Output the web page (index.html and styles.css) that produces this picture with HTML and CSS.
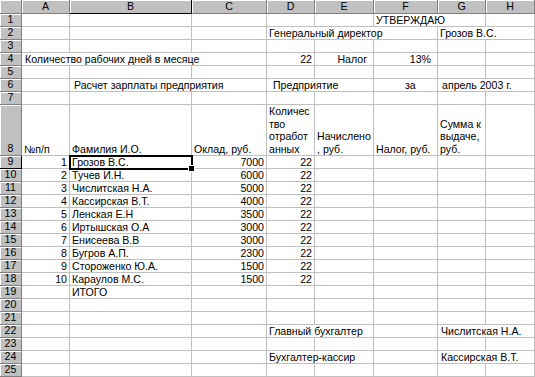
FILE: index.html
```html
<!DOCTYPE html>
<html lang="ru">
<head>
<meta charset="utf-8">
<title>Расчет зарплаты</title>
<link rel="stylesheet" href="styles.css">
</head>
<body class="page">
<table class="sheet">
  <colgroup>
    <col class="w-rh"><col class="w-a"><col class="w-b"><col class="w-c"><col class="w-d"><col class="w-e"><col class="w-f"><col class="w-g"><col class="w-h">
  </colgroup>
  <tr class="colhead">
    <th class="hd corner"></th>
    <th class="hd">A</th><th class="hd sel">B</th><th class="hd">C</th><th class="hd">D</th><th class="hd">E</th><th class="hd">F</th><th class="hd">G</th><th class="hd">H</th>
  </tr>
  <tr>
    <th class="hd">1</th>
    <td></td><td></td><td></td><td></td><td></td><td colspan="2">УТВЕРЖДАЮ</td><td></td>
  </tr>
  <tr>
    <th class="hd">2</th>
    <td></td><td></td><td></td><td colspan="3">Генеральный директор</td><td colspan="2">Грозов В.С.</td>
  </tr>
  <tr>
    <th class="hd">3</th>
    <td></td><td></td><td></td><td></td><td></td><td></td><td></td><td></td>
  </tr>
  <tr>
    <th class="hd">4</th>
    <td colspan="3" class="ind1">Количество рабочих дней в месяце</td><td class="num">22</td><td class="num pad-r">Налог</td><td class="num pad-r">13%</td><td></td><td></td>
  </tr>
  <tr>
    <th class="hd">5</th>
    <td></td><td></td><td></td><td></td><td></td><td></td><td></td><td></td>
  </tr>
  <tr>
    <th class="hd">6</th>
    <td></td><td colspan="2" class="ind2">Расчет зарплаты предприятия</td><td colspan="2" class="ind4">Предприятие</td><td class="pad-for">за</td><td colspan="2" class="ind2">апрель 2003 г.</td>
  </tr>
  <tr>
    <th class="hd">7</th>
    <td></td><td></td><td></td><td></td><td></td><td></td><td></td><td></td>
  </tr>
  <tr class="tall">
    <th class="hd">8</th>
    <td>№п/п</td>
    <td>Фамилия И.О.</td>
    <td>Оклад, руб.</td>
    <td class="wrap">Количес<br>тво<br>отработ<br>анных</td>
    <td class="wrap">Начислено<br>, руб.</td>
    <td>Налог, руб.</td>
    <td class="wrap">Сумма к<br>выдаче,<br>руб.</td>
    <td></td>
  </tr>
  <tr>
    <th class="hd hd-sel">9</th>
    <td class="num">1</td><td class="active">Грозов В.С.<span class="cursor"><span class="handle"></span></span></td><td class="num">7000</td><td class="num">22</td><td></td><td></td><td></td><td></td>
  </tr>
  <tr>
    <th class="hd">10</th>
    <td class="num">2</td><td>Тучев И.Н.</td><td class="num">6000</td><td class="num">22</td><td></td><td></td><td></td><td></td>
  </tr>
  <tr>
    <th class="hd">11</th>
    <td class="num">3</td><td>Числитская Н.А.</td><td class="num">5000</td><td class="num">22</td><td></td><td></td><td></td><td></td>
  </tr>
  <tr>
    <th class="hd">12</th>
    <td class="num">4</td><td>Кассирская В.Т.</td><td class="num">4000</td><td class="num">22</td><td></td><td></td><td></td><td></td>
  </tr>
  <tr>
    <th class="hd">13</th>
    <td class="num">5</td><td>Ленская Е.Н</td><td class="num">3500</td><td class="num">22</td><td></td><td></td><td></td><td></td>
  </tr>
  <tr>
    <th class="hd">14</th>
    <td class="num">6</td><td>Иртышская О.А</td><td class="num">3000</td><td class="num">22</td><td></td><td></td><td></td><td></td>
  </tr>
  <tr>
    <th class="hd">15</th>
    <td class="num">7</td><td>Енисеева В.В</td><td class="num">3000</td><td class="num">22</td><td></td><td></td><td></td><td></td>
  </tr>
  <tr>
    <th class="hd">16</th>
    <td class="num">8</td><td>Бугров А.П.</td><td class="num">2300</td><td class="num">22</td><td></td><td></td><td></td><td></td>
  </tr>
  <tr>
    <th class="hd">17</th>
    <td class="num">9</td><td>Стороженко Ю.А.</td><td class="num">1500</td><td class="num">22</td><td></td><td></td><td></td><td></td>
  </tr>
  <tr>
    <th class="hd">18</th>
    <td class="num">10</td><td>Караулов М.С.</td><td class="num">1500</td><td class="num">22</td><td></td><td></td><td></td><td></td>
  </tr>
  <tr>
    <th class="hd">19</th>
    <td></td><td>ИТОГО</td><td></td><td></td><td></td><td></td><td></td><td></td>
  </tr>
  <tr>
    <th class="hd">20</th>
    <td></td><td></td><td></td><td></td><td></td><td></td><td></td><td></td>
  </tr>
  <tr>
    <th class="hd">21</th>
    <td></td><td></td><td></td><td></td><td></td><td></td><td></td><td></td>
  </tr>
  <tr>
    <th class="hd">22</th>
    <td></td><td></td><td></td><td colspan="2">Главный бухгалтер</td><td></td><td colspan="2" class="ind1">Числитская Н.А.</td>
  </tr>
  <tr>
    <th class="hd">23</th>
    <td></td><td></td><td></td><td></td><td></td><td></td><td></td><td></td>
  </tr>
  <tr>
    <th class="hd">24</th>
    <td></td><td></td><td></td><td colspan="2">Бухгалтер-кассир</td><td></td><td colspan="2" class="ind1">Кассирская В.Т.</td>
  </tr>
  <tr>
    <th class="hd">25</th>
    <td></td><td></td><td></td><td></td><td></td><td></td><td></td><td></td>
  </tr>
  <tr>
    <th class="hd"></th>
    <td></td><td></td><td></td><td></td><td></td><td></td><td></td><td></td>
  </tr>
</table>
</body>
</html>
```
FILE: styles.css
```css
html, body.page {
  margin: 0;
  padding: 0;
  background: #fff;
  overflow: hidden;
}

.sheet {
  table-layout: fixed;
  border-collapse: separate;
  border-spacing: 0;
  width: 535px;
  font-family: "Liberation Sans", Arial, sans-serif;
  font-size: 10.6px;
  color: #000;
}

/* column widths, each including its right gridline */
.w-rh { width: 22px; }
.w-a { width: 48px; }
.w-b { width: 122px; }
.w-c { width: 75px; }
.w-d { width: 48px; }
.w-e { width: 59px; }
.w-f { width: 64px; }
.w-g { width: 48px; }
.w-h { width: 49px; }

.sheet td,
.sheet th {
  box-sizing: border-box;
  height: 13px;
  padding: 0 2px;
  line-height: 11px;
  white-space: nowrap;
  overflow: hidden;
  vertical-align: bottom;
  text-align: left;
  font-weight: normal;
  border-right: 1px solid #c0c0c0;
  border-bottom: 1px solid #c0c0c0;
}

.sheet .colhead th {
  height: 14px;
}

/* raised grey row and column headers */
.sheet th.hd {
  background: #c0c0c0;
  text-align: center;
  padding: 0 0 1px;
  border-right: 1px solid #808080;
  border-bottom: 1px solid #808080;
  box-shadow: inset 1px 1px 0 #fff;
}

.sheet th.sel,
.sheet th.hd-sel {
  border-right-color: #000;
  border-bottom-color: #000;
}

.sheet .tall td,
.sheet .tall th {
  height: 48px;
}

.sheet td.wrap {
  line-height: 12.5px;
}

.sheet td.num {
  text-align: right;
}

.sheet td.pad-r {
  padding-right: 6px;
}

.sheet td.pad-for {
  padding-left: 31px;
}

.sheet td.ind1 { padding-left: 3px; }
.sheet td.ind2 { padding-left: 4px; }
.sheet td.ind4 { padding-left: 6px; }

/* active cell frame with fill handle */
.sheet td.active {
  position: relative;
  overflow: visible;
}

.cursor {
  position: absolute;
  left: -1px;
  top: -1px;
  right: -2px;
  bottom: -2px;
  border: 2px solid #000;
  box-sizing: border-box;
}

.handle {
  position: absolute;
  right: -4px;
  bottom: -4px;
  width: 5px;
  height: 5px;
  background: #000;
  border: 1px solid #fff;
}
```
